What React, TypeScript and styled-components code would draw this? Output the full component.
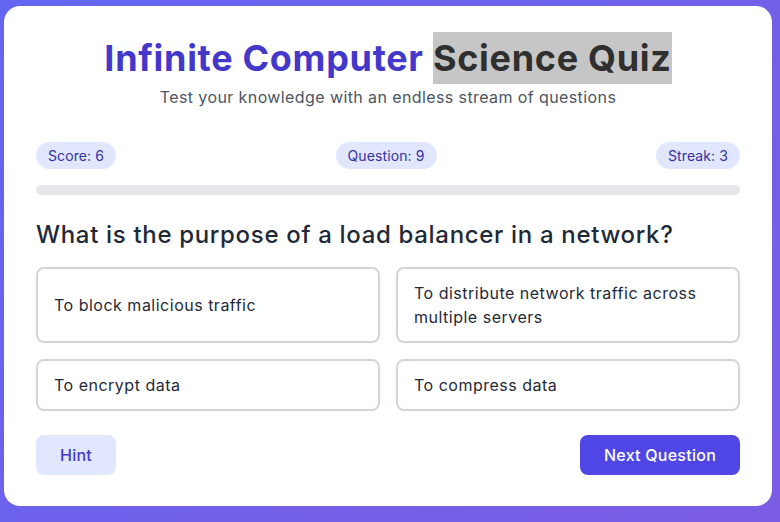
import React from "react";
import styled, { createGlobalStyle } from "styled-components";

const Global = createGlobalStyle`
  html, body { margin: 0; padding: 0; }
  body {
    background: linear-gradient(135deg, #6366f1 0%, #7c5ce4 100%);
    min-height: 522px;
    font-family: Inter, "Open Sans", sans-serif;
    padding: 6px 8px 15px 4px;
    box-sizing: border-box;
  }
`;

const Card = styled.div`
  background: #ffffff;
  border-radius: 16px;
  padding: 32px 32px 31px;
  box-sizing: border-box;
`;

const Header = styled.header`
  display: flex;
  flex-direction: column;
  align-items: center;
  gap: 7px;
  margin-bottom: 33px;
`;

const Title = styled.h1`
  margin: 0;
  font-size: 36px;
  line-height: 40px;
  font-weight: 700;
  color: #4338ca;
  letter-spacing: 0.7px;
`;

const Selected = styled.span`
  background: #c6c6c6;
  color: #2f2f2f;
  padding: 4px 0;
`;

const Subtitle = styled.p`
  margin: 0;
  font-size: 16px;
  line-height: 24px;
  color: #4b5563;
  letter-spacing: 0.4px;
`;

const Stats = styled.div`
  display: flex;
  justify-content: space-between;
  align-items: center;
`;

const Pill = styled.span`
  display: inline-flex;
  align-items: center;
  height: 27px;
  padding: 0 12px;
  border-radius: 999px;
  background: #e0e7ff;
  color: #3730a3;
  font-size: 14px;
  letter-spacing: 0.1px;
`;

const Track = styled.div`
  margin-top: 16px;
  height: 10px;
  border-radius: 999px;
  background: #e5e7eb;
  overflow: hidden;
`;

const Fill = styled.div`
  height: 100%;
  background: #4f46e5;
`;

const Question = styled.h2`
  margin: 24px 0 16px;
  font-size: 24px;
  line-height: 32px;
  font-weight: 500;
  color: #1f2937;
  letter-spacing: 0.67px;
`;

const Options = styled.div`
  display: grid;
  grid-template-columns: 1fr 1fr;
  gap: 16px;
`;

const Option = styled.button`
  display: flex;
  align-items: center;
  text-align: left;
  padding: 12px 16px;
  border: 2px solid #d1d5db;
  border-radius: 8px;
  background: #ffffff;
  color: #1f2937;
  font-family: inherit;
  font-size: 16px;
  line-height: 24px;
  letter-spacing: 0.5px;
  cursor: pointer;
`;

const Actions = styled.div`
  display: flex;
  justify-content: space-between;
  margin-top: 24px;
`;

const Button = styled.button<{ $primary?: boolean }>`
  height: 40px;
  padding: 0 24px;
  border: none;
  border-radius: 8px;
  font-family: inherit;
  font-size: 16px;
  font-weight: 500;
  letter-spacing: 0.25px;
  cursor: pointer;
  background: ${(p) => (p.$primary ? "#4f46e5" : "#e0e7ff")};
  color: ${(p) => (p.$primary ? "#ffffff" : "#4338ca")};
`;

const options = [
  "To block malicious traffic",
  "To distribute network traffic across multiple servers",
  "To encrypt data",
  "To compress data",
];

export default function App() {
  return (
    <>
      <Global />
      <Card>
        <Header>
          <Title>
            Infinite Computer <Selected>Science Quiz</Selected>
          </Title>
          <Subtitle>Test your knowledge with an endless stream of questions</Subtitle>
        </Header>
        <Stats>
          <Pill>Score: 6</Pill>
          <Pill>Question: 9</Pill>
          <Pill>Streak: 3</Pill>
        </Stats>
        <Track>
          <Fill style={{ width: "0%" }} />
        </Track>
        <Question>What is the purpose of a load balancer in a network?</Question>
        <Options>
          {options.map((o) => (
            <Option key={o}>{o}</Option>
          ))}
        </Options>
        <Actions>
          <Button>Hint</Button>
          <Button $primary>Next Question</Button>
        </Actions>
      </Card>
    </>
  );
}
